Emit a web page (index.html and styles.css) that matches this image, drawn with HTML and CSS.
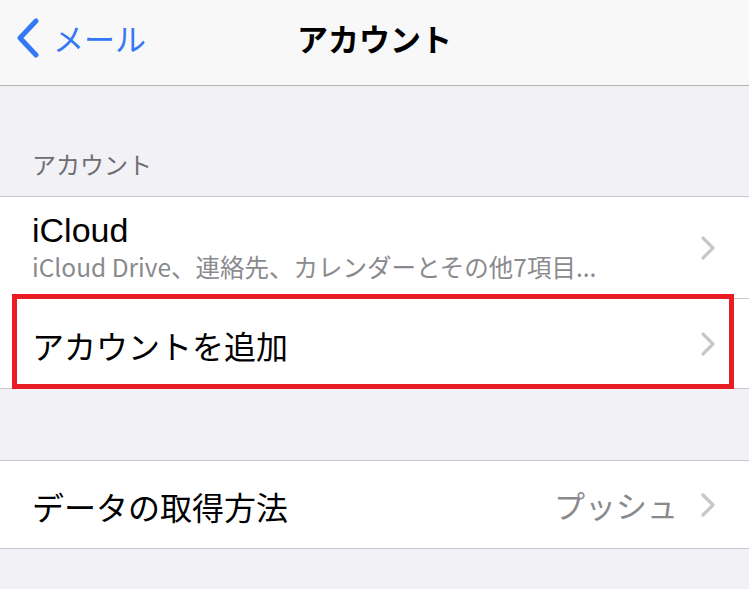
FILE: index.html
```html
<!DOCTYPE html>
<html>
<head>
    <title>アカウント</title>
    <link rel="stylesheet" href="styles.css">
</head>
<body>
    <div class="navbar">
        <a class="back" href="#">
            <svg class="back-chevron" width="24" height="40" viewBox="0 0 24 40">
                <path d="M21 3 L5 20 L21 37" fill="none" stroke="#3478f6" stroke-width="5" stroke-linecap="round" stroke-linejoin="round"/>
            </svg>
            <span>メール</span>
        </a>
        <div class="title">アカウント</div>
        <div></div>
    </div>

    <div class="section-header">アカウント</div>
    <div class="group">
        <div class="row row-tall">
            <div class="row-text">
                <div class="row-title">iCloud</div>
                <div class="row-sub">iCloud Drive、連絡先、カレンダーとその他7項目...</div>
            </div>
            <svg class="chevron" width="16" height="26" viewBox="0 0 16 26">
                <path d="M3 3 L13 13 L3 23" fill="none" stroke="#c7c7cc" stroke-width="3.2" stroke-linecap="round" stroke-linejoin="round"/>
            </svg>
        </div>
        <div class="row row-marked">
            <div class="row-title">アカウントを追加</div>
            <svg class="chevron" width="16" height="26" viewBox="0 0 16 26">
                <path d="M3 3 L13 13 L3 23" fill="none" stroke="#c7c7cc" stroke-width="3.2" stroke-linecap="round" stroke-linejoin="round"/>
            </svg>
        </div>
    </div>

    <div class="group group-second">
        <div class="row">
            <div class="row-title">データの取得方法</div>
            <span class="row-value">プッシュ</span>
            <svg class="chevron" width="16" height="26" viewBox="0 0 16 26">
                <path d="M3 3 L13 13 L3 23" fill="none" stroke="#c7c7cc" stroke-width="3.2" stroke-linecap="round" stroke-linejoin="round"/>
            </svg>
        </div>
    </div>
</body>
</html>
```

FILE: styles.css
```css
body {
    margin: 0;
    background-color: #f1f1f6;
    font-family: "Noto Sans CJK JP", "Liberation Sans", sans-serif;
    color: #000;
    height: 589px;
    overflow: hidden;
}

.navbar {
    display: grid;
    grid-template-columns: 1fr auto 1fr;
    align-items: center;
    height: 75px;
    padding-bottom: 10px;
    background-color: #f8f8f8;
    border-bottom: 1px solid #b2b2b2;
}

.back {
    display: flex;
    align-items: center;
    gap: 14px;
    padding-left: 15px;
    color: #3478f6;
    text-decoration: none;
    font-size: 31px;
}

.back-chevron {
    display: block;
}

.title {
    font-size: 31px;
    font-weight: bold;
}

.section-header {
    padding: 58px 32px 12px;
    font-size: 24px;
    line-height: 40px;
    color: #6d6d72;
}

.group {
    background-color: #fff;
    border-top: 1px solid #c8c7cc;
    border-bottom: 1px solid #c8c7cc;
    padding-left: 32px;
}

.group-second {
    margin-top: 71px;
}

.row {
    display: flex;
    align-items: center;
    height: 87px;
    padding-right: 33px;
    position: relative;
}

.row + .row {
    border-top: 1px solid #c8c7cc;
    height: 89px;
}

.row-tall {
    height: 101px;
}

.row-text {
    flex: 1;
}

.row-title {
    flex: 1;
    font-size: 32px;
    line-height: 40px;
    padding-top: 2px;
}

.row-tall .row-title {
    font-family: "Liberation Sans", sans-serif;
    font-size: 34px;
    line-height: 40px;
    margin-top: -3px;
    padding-top: 0;
}

.row-sub {
    font-size: 24.5px;
    line-height: 30px;
    color: #8a8a8e;
    margin-top: 2px;
}

.row-value {
    font-size: 31px;
    color: #8a8a8e;
    margin-right: 22px;
}

.chevron {
    display: block;
}

.row-marked::after {
    content: "";
    position: absolute;
    top: -5px;
    bottom: -1px;
    left: -20px;
    right: 15px;
    border: 5px solid #e81c25;
}
```
